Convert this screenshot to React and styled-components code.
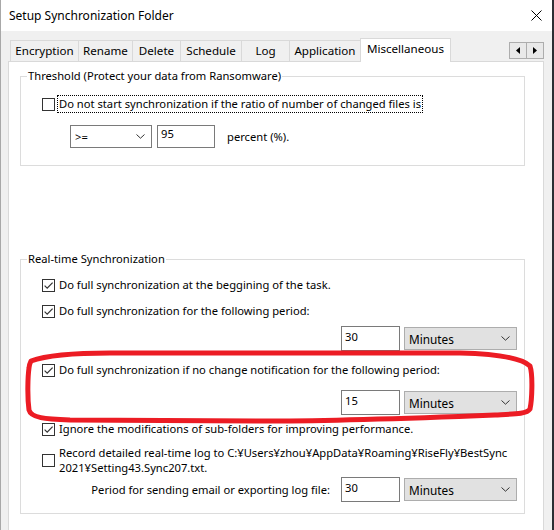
import React from "react";
import styled, { createGlobalStyle } from "styled-components";

const GlobalStyle = createGlobalStyle`
  html, body { margin: 0; padding: 0; background: #2c2f34; }
  body {
    font-family: "Noto Sans", "Segoe UI", sans-serif;
    font-size: 11.2px;
    color: #000;
  }
  #root { width: 554px; height: 530px; overflow: hidden; }
`;

const Window = styled.div`
  position: relative;
  width: 552px;
  height: 530px;
  box-sizing: border-box;
  border-left: 1px solid #a8a8a8;
  background: #f0f0f0;
  display: flex;
  flex-direction: column;
  overflow: hidden;
`;

const TitleBar = styled.div`
  height: 31px;
  flex: none;
  background: #fff;
  display: flex;
  align-items: center;
  justify-content: space-between;
  padding: 0 10px 0 8px;
  font-size: 12px;
`;

const Body = styled.div`
  flex: 1;
  display: flex;
  flex-direction: column;
  padding: 7px 8px 0 7px;
  min-height: 0;
`;

const TabRow = styled.div`
  height: 23px;
  flex: none;
  display: flex;
  align-items: flex-end;
  padding-left: 2px;
`;

const Tab = styled.div`
  box-sizing: border-box;
  width: ${(p) => p.$w}px;
  height: ${(p) => (p.$active ? 24 : 21)}px;
  margin-right: -1px;
  margin-bottom: ${(p) => (p.$active ? -1 : 0)}px;
  position: relative;
  z-index: ${(p) => (p.$active ? 2 : 1)};
  border: 1px solid #d9d9d9;
  border-bottom: none;
  background: ${(p) => (p.$active ? "#fff" : "#f0f0f0")};
  display: flex;
  align-items: ${(p) => (p.$active ? "flex-start" : "center")};
  justify-content: center;
  padding-top: ${(p) => (p.$active ? 2 : 0)}px;
  white-space: nowrap;
  line-height: 16px;
  font-size: 11.6px;
`;

const Scroller = styled.div`
  margin-left: auto;
  align-self: flex-start;
  margin-top: 4px;
  display: flex;
`;

const ScrollButton = styled.div`
  box-sizing: border-box;
  width: 18px;
  height: 17px;
  margin-left: -1px;
  border: 1px solid #adadad;
  background: #e9e9e9;
  display: flex;
  align-items: center;
  justify-content: center;
`;

const Panel = styled.div`
  flex: 1;
  background: #fff;
  border: 1px solid #d9d9d9;
  border-bottom: none;
  padding: 6px 18px 0 11px;
  display: flex;
  flex-direction: column;
`;

const Group = styled.fieldset`
  margin: ${(p) => p.$top || 0}px 0 0 0;
  padding: 0;
  border: 1px solid #dcdcdc;
  min-width: 0;
`;

const Legend = styled.legend`
  margin-left: 6px;
  padding: 0 1px;
  line-height: 16px;
  font-size: 11.2px;
`;

const GroupBody = styled.div`
  display: flex;
  flex-direction: column;
  padding: ${(p) => p.$pad};
`;

const CheckRow = styled.label`
  display: flex;
  align-items: center;
  gap: 2px;
  margin-top: ${(p) => p.$gap || 0}px;
`;

const Box = styled.span`
  box-sizing: border-box;
  flex: none;
  width: 13px;
  height: 13px;
  border: 1px solid #333;
  background: #fff;
  display: flex;
  align-items: center;
  justify-content: center;
`;

const CheckText = styled.span`
  border: 1px ${(p) => (p.$focus ? "dotted #000" : "solid transparent")};
  padding: 0 1px;
  line-height: ${(p) => (p.$multi ? 15 : 16)}px;
`;

const FieldRow = styled.div`
  display: flex;
  align-items: center;
  justify-content: ${(p) => (p.$end ? "flex-end" : "flex-start")};
  gap: 4px;
  margin-top: ${(p) => p.$gap || 0}px;
  padding-left: ${(p) => p.$indent || 0}px;
  padding-right: ${(p) => (p.$end ? 7 : 0)}px;
`;

const TextBox = styled.div`
  box-sizing: border-box;
  width: ${(p) => p.$w}px;
  height: ${(p) => p.$h}px;
  margin-left: ${(p) => p.$ml || 0}px;
  border: 1px solid #7a7a7a;
  background: #fff;
  padding: ${(p) => (p.$h > 23 ? 2 : 0)}px 3px 0;
  line-height: 16px;
`;

const Combo = styled.div`
  box-sizing: border-box;
  width: ${(p) => p.$w}px;
  height: ${(p) => p.$h}px;
  border: 1px solid ${(p) => (p.$flat ? "#7a7a7a" : "#adadad")};
  background: ${(p) => (p.$flat ? "#fff" : "#e1e1e1")};
  display: flex;
  align-items: center;
  justify-content: space-between;
  padding: 0 6px 0 4px;
  font-size: ${(p) => (p.$flat ? 11.2 : 11.8)}px;
`;

const Caption = styled.span`
  margin-left: ${(p) => p.$ml || 0}px;
  margin-right: ${(p) => p.$mr || 0}px;
  white-space: nowrap;
`;

const Annotation = styled.svg`
  position: absolute;
  left: -1px;
  top: 0;
  pointer-events: none;
  z-index: 10;
`;

const Tick = () => (
  <svg width="11" height="11" viewBox="0 0 11 11">
    <path d="M1.6 5.6 L4.2 8.2 L9.6 2.6" fill="none" stroke="#333" strokeWidth="1.2" />
  </svg>
);

const Chevron = ({ w = 8 }) => (
  <svg width={w} height="5" viewBox={`0 0 ${w} 5`}>
    <path d={`M0.5 0.5 L${w / 2} 4.2 L${w - 0.5} 0.5`} fill="none" stroke="#333" strokeWidth="1" />
  </svg>
);

const Check = ({ checked, focus, multi, gap, children }) => (
  <CheckRow $gap={gap}>
    <Box>{checked && <Tick />}</Box>
    <CheckText $focus={focus} $multi={multi}>
      {children}
    </CheckText>
  </CheckRow>
);

const Period = ({ value }) => (
  <>
    <TextBox $w={59} $h={25}>{value}</TextBox>
    <Combo $w={113} $h={23}>
      <span>Minutes</span>
      <Chevron w={9} />
    </Combo>
  </>
);

const tabs = [
  ["Encryption", 69],
  ["Rename", 55],
  ["Delete", 49],
  ["Schedule", 62],
  ["Log", 49],
  ["Application", 72],
  ["Miscellaneous", 91, true],
];

export default function App() {
  return (
    <>
      <GlobalStyle />
      <Window>
        <TitleBar>
          <span>Setup Synchronization Folder</span>
          <svg width="11" height="11" viewBox="0 0 11 11">
            <path d="M0.5 0.5 L10.5 10.5 M10.5 0.5 L0.5 10.5" stroke="#000" strokeWidth="1" />
          </svg>
        </TitleBar>
        <Body>
          <TabRow>
            {tabs.map(([name, w, active]) => (
              <Tab key={name} $w={w} $active={active}>
                {name}
              </Tab>
            ))}
            <Scroller>
              <ScrollButton>
                <svg width="4" height="7" viewBox="0 0 4 7">
                  <path d="M4 0 L0 3.5 L4 7 Z" fill="#000" />
                </svg>
              </ScrollButton>
              <ScrollButton>
                <svg width="4" height="7" viewBox="0 0 4 7">
                  <path d="M0 0 L4 3.5 L0 7 Z" fill="#000" />
                </svg>
              </ScrollButton>
            </Scroller>
          </TabRow>
          <Panel>
            <Group>
              <Legend>Threshold (Protect your data from Ransomware)</Legend>
              <GroupBody $pad="11px 0 17px 21px">
                <Check focus>
                  Do not start synchronization if the ratio of number of changed files is
                </Check>
                <FieldRow $gap={12} $indent={28}>
                  <Combo $w={82} $h={23} $flat>
                    <span>&gt;=</span>
                    <Chevron w={9} />
                  </Combo>
                  <TextBox $w={58} $h={23} $ml={1}>95</TextBox>
                  <Caption $ml={8}>percent (%).</Caption>
                </FieldRow>
              </GroupBody>
            </Group>

            <Group $top={85}>
              <Legend>Real-time Synchronization</Legend>
              <GroupBody $pad="9px 0 11px 21px">
                <Check checked>Do full synchronization at the beggining of the task.</Check>
                <Check checked gap={8}>
                  Do full synchronization for the following period:
                </Check>
                <FieldRow $end $gap={6}>
                  <Period value="30" />
                </FieldRow>
                <Check checked gap={10}>
                  Do full synchronization if no change notification for the following period:
                </Check>
                <FieldRow $end $gap={11}>
                  <Period value="15" />
                </FieldRow>
                <Check checked gap={5}>
                  Ignore the modifications of sub-folders for improving performance.
                </Check>
                <Check multi gap={6}>
                  Record detailed real-time log to C:¥Users¥zhou¥AppData¥Roaming¥RiseFly¥BestSync
                  <br />
                  2021¥Setting43.Sync207.txt.
                </Check>
                <FieldRow $end $gap={1}>
                  <Caption $mr={7}>Period for sending email or exporting log file:</Caption>
                  <Period value="30" />
                </FieldRow>
              </GroupBody>
            </Group>
          </Panel>
        </Body>
        <Annotation width="554" height="530" viewBox="0 0 554 530">
          <path
            d="M31 361 C50 354, 80 353, 110 353 L460 353 C500 354, 522 358, 530 366 C533 375, 532 400, 530 409 C527 414, 515 414, 495 415 C420 418, 330 421, 270 421 L70 420 C45 419, 31 418, 29 410 C27 395, 28 375, 29 368 C29 365, 30 363, 31 361 Z"
            fill="none"
            stroke="#ec1c24"
            strokeWidth="5"
            strokeLinejoin="round"
          />
        </Annotation>
      </Window>
    </>
  );
}
